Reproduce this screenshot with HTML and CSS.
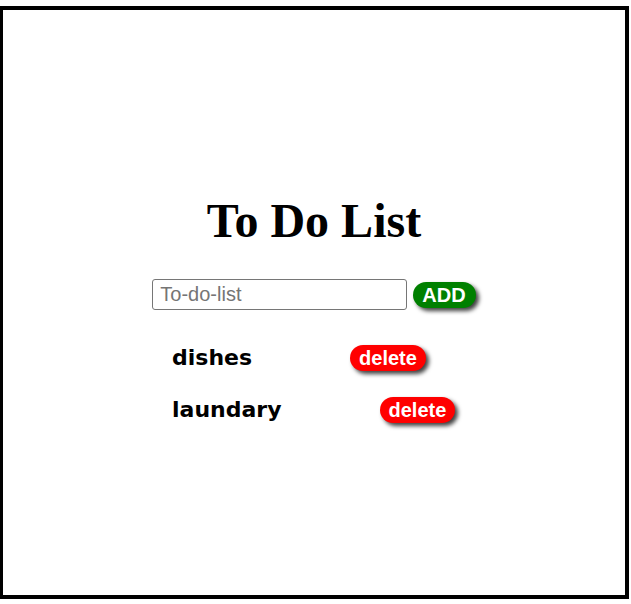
FILE: index.html
```html
<!DOCTYPE html>
<html>
<head>
<meta charset="utf-8">
<link rel="stylesheet" href="styles.css">
</head>
<body>
<div class="app">
  <h1 class="title">To Do List</h1>
  <div class="form">
    <input class="field" type="text" placeholder="To-do-list">
    <button class="add">ADD</button>
  </div>
  <ul class="list">
    <li class="item"><span class="name">dishes</span><button class="del">delete</button></li>
    <li class="item"><span class="name">laundary</span><button class="del">delete</button></li>
  </ul>
</div>
</body>
</html>
```

FILE: styles.css
```css
html, body {
  margin: 0;
  padding: 0;
  background: #fff;
}
.app {
  box-sizing: border-box;
  margin-top: 6px;
  width: 629px;
  height: 593px;
  border: 4px solid #000;
  border-left-width: 3px;
  padding-top: 187px;
  display: flex;
  flex-direction: column;
  align-items: center;
}
.title {
  margin: 0;
  font-family: "Liberation Serif", serif;
  font-weight: bold;
  font-size: 48px;
  line-height: 48px;
  color: #000;
}
.form {
  margin-top: 34px;
  display: flex;
  align-items: center;
}
.field {
  box-sizing: border-box;
  width: 255px;
  height: 31px;
  border: 1px solid #767676;
  border-radius: 3px;
  padding: 1px 7px;
  font-family: "Liberation Sans", sans-serif;
  font-size: 20px;
  color: #000;
  outline: none;
}
.field::placeholder {
  color: #757575;
}
.add, .del {
  border: none;
  border-radius: 14px;
  color: #fff;
  font-family: "Liberation Sans", sans-serif;
  font-weight: bold;
  font-size: 20px;
  line-height: 22px;
  padding: 2px 9px;
  box-shadow: 3px 3px 4px rgba(0, 0, 0, 0.75);
  cursor: pointer;
}
.add {
  margin-left: 6px;
  background: #008000;
  padding: 2px 10px 2px 9px;
}
.del {
  background: #ff0000;
}
.list {
  align-self: stretch;
  list-style: none;
  margin: 35px 0 0;
  padding: 0 0 0 169px;
  display: flex;
  flex-direction: column;
  gap: 26px;
}
.item {
  display: flex;
  align-items: baseline;
  height: 26px;
}
.name {
  font-family: "DejaVu Sans", sans-serif;
  font-weight: bold;
  font-size: 22px;
  color: #000;
  margin-right: 98px;
}
```
